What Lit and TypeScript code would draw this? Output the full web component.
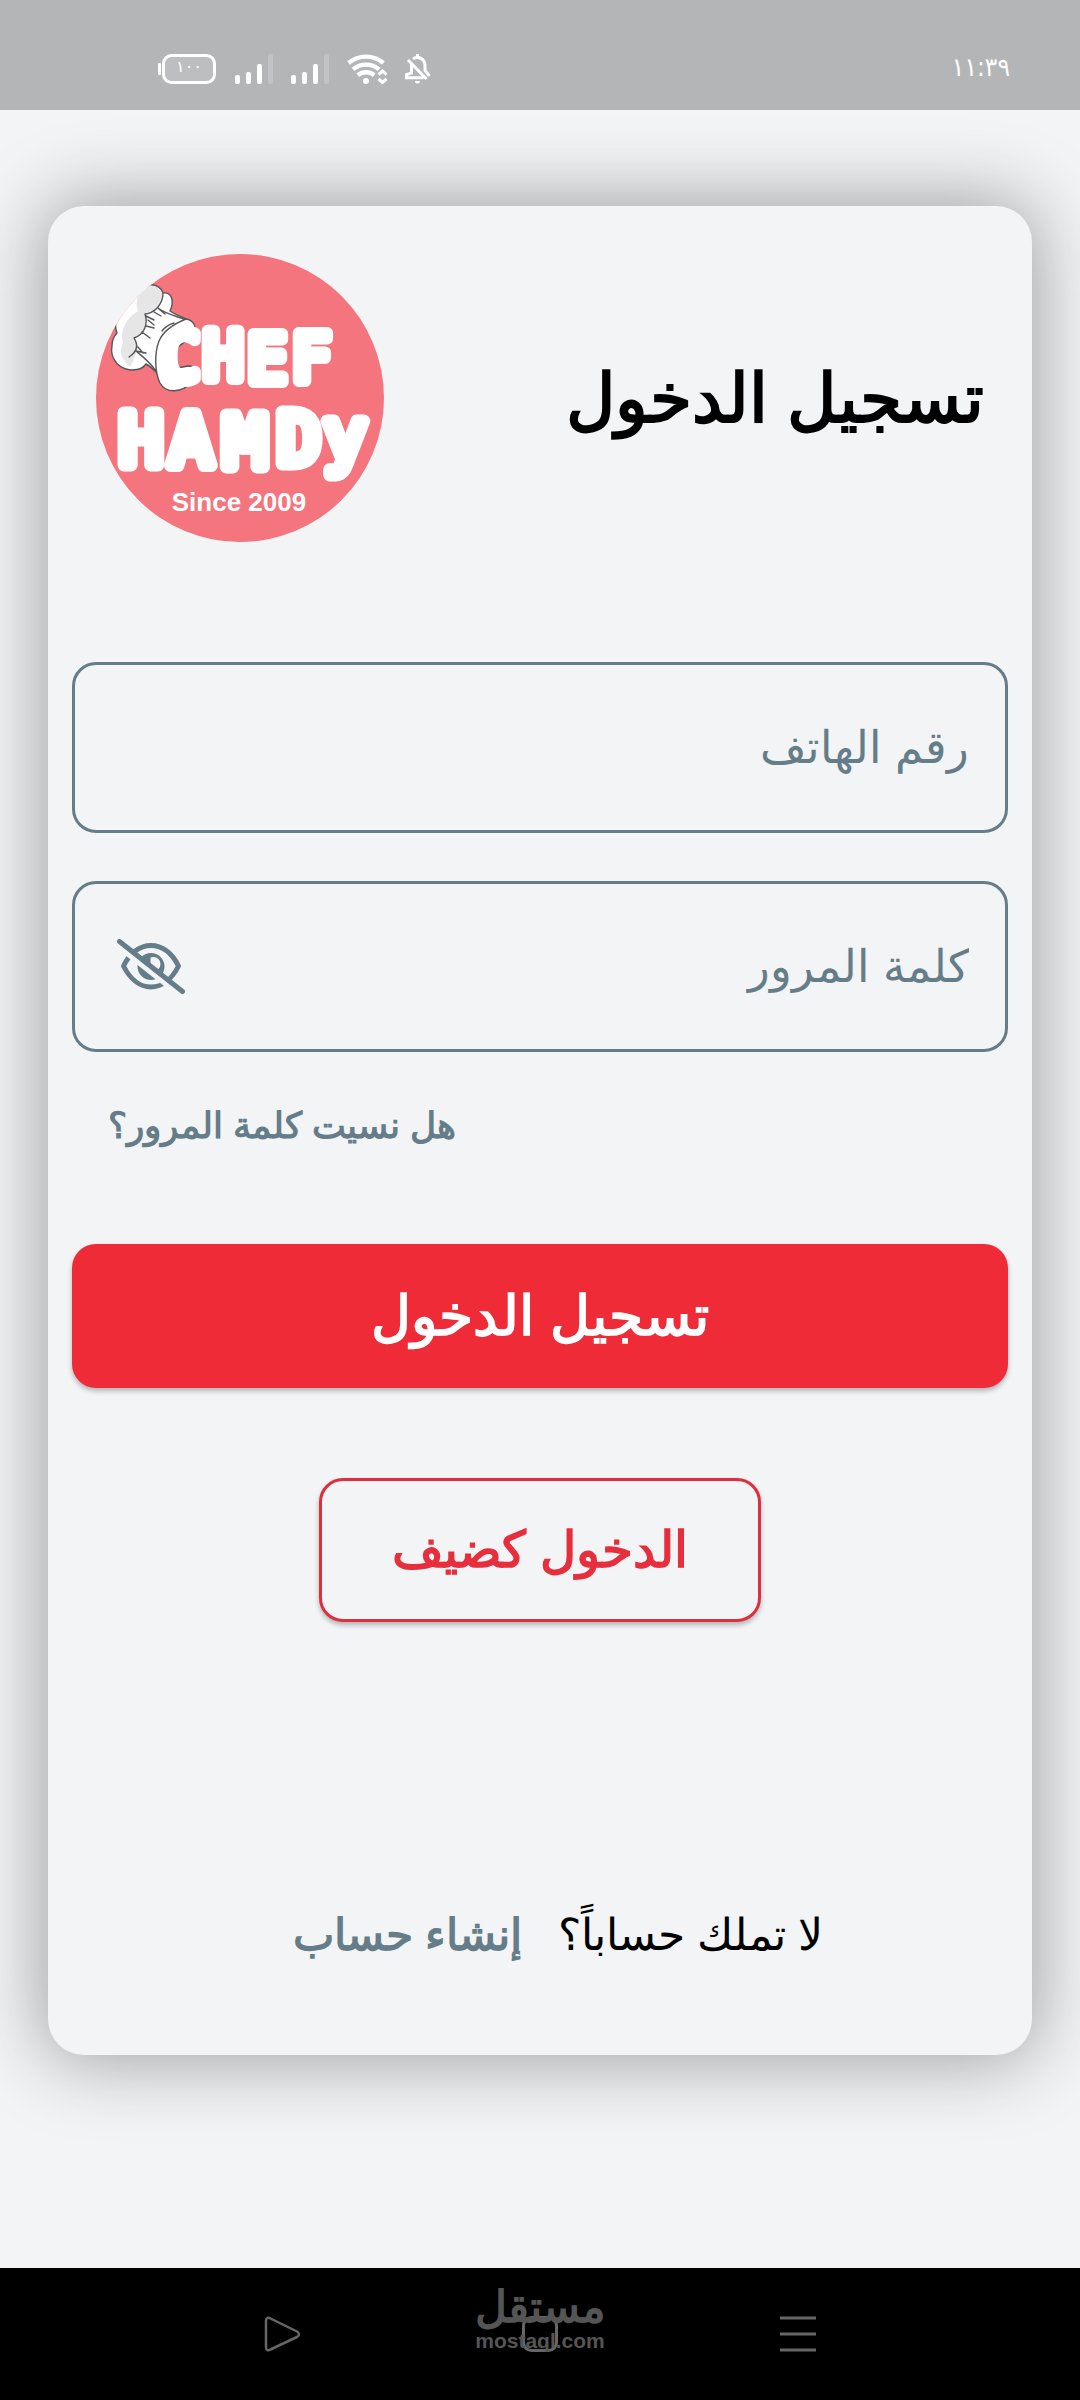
import { LitElement, html, svg, css } from "lit";
import { customElement, state } from "lit/decorators.js";

const signal = () => html`
  <svg width="38" height="30" viewBox="0 0 38 30" fill="#fff" aria-hidden="true">
    <rect x="0" y="21" width="5" height="9" rx="2" />
    <rect x="11" y="18" width="5" height="12" rx="2" />
    <rect x="22" y="10" width="5" height="20" rx="2" />
    <rect x="33" y="0" width="5" height="30" rx="2" opacity="0.2" />
  </svg>
`;

@customElement("status-bar")
export class StatusBar extends LitElement {
  static styles = css`
    :host {
      display: flex;
      align-items: center;
      justify-content: space-between;
      box-sizing: border-box;
      height: 110px;
      padding: 28px 70px 0 157px;
      background: #b4b5b7;
      color: #fff;
    }
    .time {
      padding-bottom: 4px;
      font: 26px/28px "DejaVu Sans Condensed", "DejaVu Sans", sans-serif;
    }
    .icons {
      display: flex;
      direction: ltr;
      gap: 18px;
    }
    .level {
      font: 16px "DejaVu Sans", sans-serif;
    }
  `;

  render() {
    return html`
      <span class="time">١١:٣٩</span>
      <div class="icons">
        <svg width="60" height="30" viewBox="0 0 60 30" fill="none" aria-hidden="true">
          <rect x="1" y="9" width="3" height="12" rx="1" fill="#fff" />
          <rect x="6.5" y="1.5" width="51" height="27" rx="8" fill="#fff" fill-opacity="0.12" stroke="#fff" stroke-width="3" />
          <text class="level" x="32" y="18" text-anchor="middle" fill="#fff">١٠٠</text>
        </svg>
        ${signal()} ${signal()}
        <svg width="40" height="30" viewBox="0 0 40 30" fill="none" stroke="#fff" aria-hidden="true">
          <g stroke-width="4.4">
            <path d="M1.6 9A27 27 0 0 1 36.4 9" />
            <path d="M6 15.4A20 20 0 0 1 32 15.4" />
            <path d="M10.8 21.2A13 13 0 0 1 27.2 21.2" />
          </g>
          <circle cx="19" cy="27" r="3" fill="#fff" stroke="none" />
          <path d="M31.500 20.500l4-3.500 4 3.500M31.500 25l4 3.500 4-3.500" stroke-width="3" />
        </svg>
        <svg width="26" height="30" viewBox="0 0 26 30" fill="none" stroke="#fff" stroke-width="3" aria-hidden="true">
          <path d="M12.500 0v4M8 5.200C13 1 20 5 20 11.500v5l4.500 5.500" />
          <path d="M6.500 9.500v9.500L1.500 20.500v3.200H18.500" />
          <path d="M3 6L21.500 25" />
          <path d="M10 27h5a2.500 2.500 0 0 1-5 0z" fill="#fff" stroke="none" />
        </svg>
      </div>
    `;
  }
}

@customElement("chef-logo")
export class ChefLogo extends LitElement {
  static styles = css`
    :host {
      display: block;
      flex: none;
      direction: ltr;
    }
    svg {
      display: block;
    }
    .name {
      font-family: "DejaVu Sans Mono", monospace;
      fill: #fff;
      stroke: #fff;
      stroke-linejoin: round;
      stroke-linecap: round;
      text-anchor: middle;
    }
    .first {
      font-size: 66px;
      stroke-width: 12px;
    }
    .second {
      font-size: 72px;
      stroke-width: 13px;
    }
    .since {
      font: bold 26px "Liberation Sans", sans-serif;
      fill: #fff;
      text-anchor: middle;
    }
  `;

  render() {
    return html`
      <svg width="288" height="288" viewBox="0 0 288 288" role="img" aria-label="Chef Hamdy">
        <clipPath id="disc"><circle cx="144" cy="144" r="144" /></clipPath>
        <g clip-path="url(#disc)">
          <rect width="288" height="288" fill="#f4757d" />
          <g stroke="#57575a" stroke-width="1.4" stroke-linecap="round" stroke-linejoin="round">
            <path
              fill="#fff"
              d="M52 31C60 30 65 34 67 39C75 38 79 46 74 57C78 60 84 62 90 65L66 84L60 118C57 115 54 112 50 110C46 116 37 117 30 115C20 112 14 102 16 92C16 86 18 82 21 79C17 70 22 60 29 54C20 40 40 30 52 31Z"
            />
            <path
              fill="#e6e6e7"
              stroke="none"
              d="M52 32C60 31 65 35 66 41C66 48 60 56 50 60C52 70 49 80 38 84C44 92 40 102 34 113C26 106 22 98 27 89C24 78 28 66 42 57C38 46 44 36 52 32Z"
            />
            <path
              fill="none"
              d="M67 39C67 45 66 48 62 53C58 58 52 60 49 60M49 60C52 70 49 80 38 84M38 84C43 92 41 98 33 103M62 54C70 60 80 62 90 66M40 97C46 102 54 108 60 117M50 62l8 4M52 66l6 5M50 72l8 2M46 78l8 6M58 58l7 4M63 55l6 5M42 93l5 6M40 97l10 2"
            />
            <path
              fill="#fff"
              d="M90 65C97 66 101 72 98 79C91 90 76 92 76 104C76 116 84 114 92 112C102 112 104 120 96 128C86 139 70 140 64 129C59 119 58 100 63 87C68 75 80 69 90 65Z"
            />
            <path fill="none" d="M66 77C70 72 74 70 78 69" />
          </g>
          <text class="name first" x="84 127 171 215" y="126 125 128 127">CHEF</text>
          <text class="name second" x="45 95 149 203 249" y="211 212 213 210 206">HAMDy</text>
          <text class="since" x="143" y="257">Since 2009</text>
        </g>
      </svg>
    `;
  }
}

@customElement("login-card")
export class LoginCard extends LitElement {
  static styles = css`
    :host {
      display: flex;
      flex-direction: column;
      box-sizing: border-box;
      padding: 48px 24px 92px;
      border-radius: 36px;
      background: #f2f4f6;
      box-shadow: 0 0 76px 5px #9e9e9e;
    }
    header {
      display: flex;
      align-items: center;
      justify-content: space-between;
      padding: 0 24px;
    }
    h1 {
      margin: 0;
      font-size: 68px;
      line-height: 80px;
      color: #000;
    }
    form {
      display: flex;
      flex-direction: column;
      margin-top: 120px;
    }
    .field {
      display: flex;
      align-items: center;
      box-sizing: border-box;
      height: 171px;
      margin-bottom: 48px;
      padding: 0 36px 0 42px;
      border: 3px solid #657d89;
      border-radius: 24px;
    }
    input {
      flex: 1;
      min-width: 0;
      padding: 0;
      border: 0;
      outline: 0;
      background: none;
      font: inherit;
      font-size: 45px;
      line-height: 72px;
      color: #657d89;
    }
    input::placeholder {
      color: #657d89;
      opacity: 1;
    }
    button {
      font: inherit;
      cursor: pointer;
    }
    .eye {
      display: flex;
      padding: 0;
      border: 0;
      background: none;
    }
    a {
      color: #657d89;
      font-weight: bold;
      text-decoration: none;
    }
    .forgot {
      align-self: flex-end;
      padding-left: 36px;
      font-size: 36px;
      line-height: 52px;
    }
    .primary,
    .guest {
      box-sizing: border-box;
      height: 144px;
      border-radius: 24px;
      font-weight: bold;
      line-height: 72px;
      box-shadow: 0 3px 5px #0004;
    }
    .primary {
      margin-top: 92px;
      border: 0;
      background: #f02b38;
      color: #fff;
      font-size: 55px;
    }
    .guest {
      align-self: center;
      margin-top: 90px;
      padding: 0 70px;
      border: 3px solid #dd303f;
      background: #f2f4f6;
      color: #e62e3c;
      font-size: 50px;
    }
    footer {
      display: flex;
      align-items: center;
      justify-content: center;
      gap: 36px;
      margin-top: auto;
      padding-left: 36px;
      font-size: 44px;
      line-height: 56px;
      color: #000;
    }
  `;

  @state() private visible = false;

  render() {
    return html`
      <header>
        <h1>تسجيل الدخول</h1>
        <chef-logo></chef-logo>
      </header>
      <form @submit=${(e: Event) => e.preventDefault()}>
        <div class="field">
          <input type="tel" dir="rtl" placeholder="رقم الهاتف" aria-label="رقم الهاتف" />
        </div>
        <div class="field">
          <input type=${this.visible ? "text" : "password"} placeholder="كلمة المرور" aria-label="كلمة المرور" />
          <button class="eye" type="button" aria-label="إظهار كلمة المرور" @click=${() => (this.visible = !this.visible)}>
            <svg width="68" height="56" viewBox="0 0 68 56" fill="none" stroke-linecap="round">
              <path
                d="M6.500 27C13 14 23 6.500 34 6.500S55 14 61.500 27C55 40 45 48 34 48S13 40 6.500 27Z"
                stroke="#657d89"
                stroke-width="5"
                stroke-linejoin="round"
              />
              <circle cx="34" cy="27.500" r="13.500" fill="#657d89" />
              <circle cx="36.500" cy="25" r="7" fill="#f2f4f6" />
              <path d="M24.500 18.500a13 13 0 0 1 9-3.500v10z" fill="#657d89" />
              <path d="M0 6.600L62 55.600" stroke="#f2f4f6" stroke-width="5" />
              <path d="M2.500 2.500L65.500 52.500" stroke="#657d89" stroke-width="5" />
            </svg>
          </button>
        </div>
        <a class="forgot" href="#forgot">هل نسيت كلمة المرور؟</a>
        <button class="primary" type="submit">تسجيل الدخول</button>
        <button class="guest" type="button">الدخول كضيف</button>
      </form>
      <footer>
        <span>لا تملك حساباً؟</span>
        <a href="#register">إنشاء حساب</a>
      </footer>
    `;
  }
}

@customElement("nav-bar")
export class NavBar extends LitElement {
  static styles = css`
    :host {
      display: flex;
      align-items: center;
      justify-content: center;
      gap: 222px;
      position: relative;
      height: 132px;
      background: #000;
    }
    button {
      display: flex;
      padding: 0;
      border: 0;
      background: none;
    }
    .mark {
      position: absolute;
      inset: 0;
      display: flex;
      flex-direction: column;
      align-items: center;
      justify-content: center;
      padding-bottom: 30px;
      color: #555;
      font-weight: bold;
      pointer-events: none;
    }
    .word {
      font-size: 44px;
      line-height: 44px;
    }
    .site {
      font-size: 21px;
      line-height: 24px;
    }
  `;

  private icon(label: string, shape: unknown) {
    return html`
      <button aria-label=${label}>
        <svg width="36" height="36" viewBox="0 0 36 36" fill="none" stroke="#666" stroke-width="3" stroke-linejoin="round">${shape}</svg>
      </button>
    `;
  }

  render() {
    return html`
      ${this.icon("القائمة", svg`<path d="M0 2H36M0 18H36M0 34H36" />`)}
      ${this.icon("الرئيسية", svg`<rect x="1.500" y="1.500" width="33" height="33" rx="8" />`)}
      ${this.icon("رجوع", svg`<path d="M2 4.500C2 1.500 4.500 1 6.500 2.500L33 15.500C35.500 17 35.500 19.500 33 21L6.500 33.500C4.500 35 2 34.500 2 31.500Z" stroke-width="2.500" />`)}
      <div class="mark">
        <span class="word">مستقل</span>
        <span class="site" dir="ltr">mostaql.com</span>
      </div>
    `;
  }
}

@customElement("app-root")
export class AppRoot extends LitElement {
  static styles = css`
    :host {
      display: flex;
      flex-direction: column;
      min-height: 100vh;
      direction: rtl;
      background: #f2f4f6;
      font-family: "Liberation Sans", sans-serif;
    }
    main {
      display: flex;
      flex: 1;
      flex-direction: column;
      padding: 96px 48px 213px;
      overflow: clip;
    }
    login-card {
      flex: 1;
    }
  `;

  render() {
    return html`
      <status-bar></status-bar>
      <main><login-card></login-card></main>
      <nav-bar></nav-bar>
    `;
  }
}
